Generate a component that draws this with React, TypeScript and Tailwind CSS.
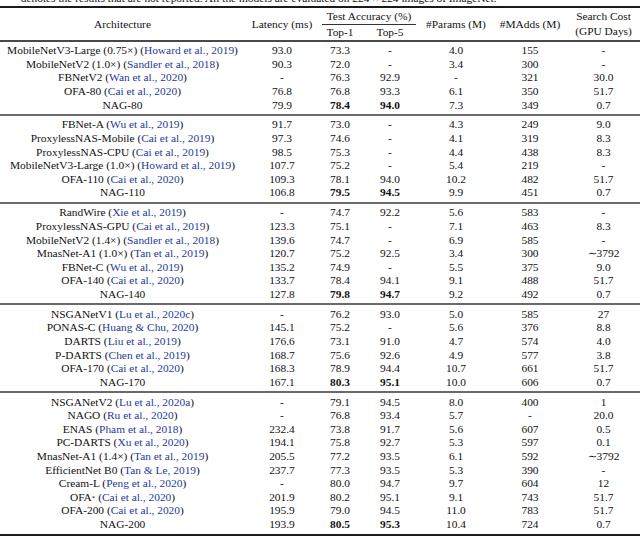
import React from 'react';

type Row = {
  name: string;
  cite?: string;
  sup?: string;
  lat: string;
  top1: string;
  top5: string;
  params: string;
  madds: string;
  cost: string;
  best?: boolean;
};

const COLS = 'grid grid-cols-[245px_74px_42px_58px_74px_74px_73px]';

const GROUPS: Row[][] = [
  [
    { name: 'MobileNetV3-Large (0.75×)', cite: 'Howard et al., 2019', lat: '93.0', top1: '73.3', top5: '-', params: '4.0', madds: '155', cost: '-' },
    { name: 'MobileNetV2 (1.0×)', cite: 'Sandler et al., 2018', lat: '90.3', top1: '72.0', top5: '-', params: '3.4', madds: '300', cost: '-' },
    { name: 'FBNetV2', cite: 'Wan et al., 2020', lat: '-', top1: '76.3', top5: '92.9', params: '-', madds: '321', cost: '30.0' },
    { name: 'OFA-80', cite: 'Cai et al., 2020', lat: '76.8', top1: '76.8', top5: '93.3', params: '6.1', madds: '350', cost: '51.7' },
    { name: 'NAG-80', lat: '79.9', top1: '78.4', top5: '94.0', params: '7.3', madds: '349', cost: '0.7', best: true },
  ],
  [
    { name: 'FBNet-A', cite: 'Wu et al., 2019', lat: '91.7', top1: '73.0', top5: '-', params: '4.3', madds: '249', cost: '9.0' },
    { name: 'ProxylessNAS-Mobile', cite: 'Cai et al., 2019', lat: '97.3', top1: '74.6', top5: '-', params: '4.1', madds: '319', cost: '8.3' },
    { name: 'ProxylessNAS-CPU', cite: 'Cai et al., 2019', lat: '98.5', top1: '75.3', top5: '-', params: '4.4', madds: '438', cost: '8.3' },
    { name: 'MobileNetV3-Large (1.0×)', cite: 'Howard et al., 2019', lat: '107.7', top1: '75.2', top5: '-', params: '5.4', madds: '219', cost: '-' },
    { name: 'OFA-110', cite: 'Cai et al., 2020', lat: '109.3', top1: '78.1', top5: '94.0', params: '10.2', madds: '482', cost: '51.7' },
    { name: 'NAG-110', lat: '106.8', top1: '79.5', top5: '94.5', params: '9.9', madds: '451', cost: '0.7', best: true },
  ],
  [
    { name: 'RandWire', cite: 'Xie et al., 2019', lat: '-', top1: '74.7', top5: '92.2', params: '5.6', madds: '583', cost: '-' },
    { name: 'ProxylessNAS-GPU', cite: 'Cai et al., 2019', lat: '123.3', top1: '75.1', top5: '-', params: '7.1', madds: '463', cost: '8.3' },
    { name: 'MobileNetV2 (1.4×)', cite: 'Sandler et al., 2018', lat: '139.6', top1: '74.7', top5: '-', params: '6.9', madds: '585', cost: '-' },
    { name: 'MnasNet-A1 (1.0×)', cite: 'Tan et al., 2019', lat: '120.7', top1: '75.2', top5: '92.5', params: '3.4', madds: '300', cost: '∼3792' },
    { name: 'FBNet-C', cite: 'Wu et al., 2019', lat: '135.2', top1: '74.9', top5: '-', params: '5.5', madds: '375', cost: '9.0' },
    { name: 'OFA-140', cite: 'Cai et al., 2020', lat: '133.7', top1: '78.4', top5: '94.1', params: '9.1', madds: '488', cost: '51.7' },
    { name: 'NAG-140', lat: '127.8', top1: '79.8', top5: '94.7', params: '9.2', madds: '492', cost: '0.7', best: true },
  ],
  [
    { name: 'NSGANetV1', cite: 'Lu et al., 2020c', lat: '-', top1: '76.2', top5: '93.0', params: '5.0', madds: '585', cost: '27' },
    { name: 'PONAS-C', cite: 'Huang & Chu, 2020', lat: '145.1', top1: '75.2', top5: '-', params: '5.6', madds: '376', cost: '8.8' },
    { name: 'DARTS', cite: 'Liu et al., 2019', lat: '176.6', top1: '73.1', top5: '91.0', params: '4.7', madds: '574', cost: '4.0' },
    { name: 'P-DARTS', cite: 'Chen et al., 2019', lat: '168.7', top1: '75.6', top5: '92.6', params: '4.9', madds: '577', cost: '3.8' },
    { name: 'OFA-170', cite: 'Cai et al., 2020', lat: '168.3', top1: '78.9', top5: '94.4', params: '10.7', madds: '661', cost: '51.7' },
    { name: 'NAG-170', lat: '167.1', top1: '80.3', top5: '95.1', params: '10.0', madds: '606', cost: '0.7', best: true },
  ],
  [
    { name: 'NSGANetV2', cite: 'Lu et al., 2020a', lat: '-', top1: '79.1', top5: '94.5', params: '8.0', madds: '400', cost: '1' },
    { name: 'NAGO', cite: 'Ru et al., 2020', lat: '-', top1: '76.8', top5: '93.4', params: '5.7', madds: '-', cost: '20.0' },
    { name: 'ENAS', cite: 'Pham et al., 2018', lat: '232.4', top1: '73.8', top5: '91.7', params: '5.6', madds: '607', cost: '0.5' },
    { name: 'PC-DARTS', cite: 'Xu et al., 2020', lat: '194.1', top1: '75.8', top5: '92.7', params: '5.3', madds: '597', cost: '0.1' },
    { name: 'MnasNet-A1 (1.4×)', cite: 'Tan et al., 2019', lat: '205.5', top1: '77.2', top5: '93.5', params: '6.1', madds: '592', cost: '∼3792' },
    { name: 'EfficientNet B0', cite: 'Tan & Le, 2019', lat: '237.7', top1: '77.3', top5: '93.5', params: '5.3', madds: '390', cost: '-' },
    { name: 'Cream-L', cite: 'Peng et al., 2020', lat: '-', top1: '80.0', top5: '94.7', params: '9.7', madds: '604', cost: '12' },
    { name: 'OFA', sup: '*', cite: 'Cai et al., 2020', lat: '201.9', top1: '80.2', top5: '95.1', params: '9.1', madds: '743', cost: '51.7' },
    { name: 'OFA-200', cite: 'Cai et al., 2020', lat: '195.9', top1: '79.0', top5: '94.5', params: '11.0', madds: '783', cost: '51.7' },
    { name: 'NAG-200', lat: '193.9', top1: '80.5', top5: '95.3', params: '10.4', madds: '724', cost: '0.7', best: true },
  ],
];

function TableRow({ row }: { row: Row }) {
  return (
    <div className={`${COLS} h-[13.6px] leading-[13.6px] text-center whitespace-nowrap`}>
      <div>
        {row.name}
        {row.sup && <sup className="text-[7px] relative -top-[1px]">{row.sup}</sup>}
        {row.cite && (
          <>
            {' ('}
            <span className="text-[#1f3a9a]">{row.cite}</span>
            {')'}
          </>
        )}
      </div>
      <div>{row.lat}</div>
      <div className={row.best ? 'font-bold' : ''}>{row.top1}</div>
      <div className={row.best ? 'font-bold' : ''}>{row.top5}</div>
      <div>{row.params}</div>
      <div>{row.madds}</div>
      <div>{row.cost}</div>
    </div>
  );
}

export default function App(): React.JSX.Element {
  return (
    <div className="w-[640px] h-[538px] overflow-hidden bg-white text-[#111] font-[family-name:'Liberation_Serif',serif] text-[11.4px]">
      {/* caption, cut at the top of the crop */}
      <div className="h-[6px] overflow-hidden flex items-end pl-[4px]">
        <div className="leading-[13.6px] whitespace-nowrap">
          “-” denotes the results that are not reported. All the models are evaluated on 224 × 224 images of ImageNet.
        </div>
      </div>

      {/* header */}
      <div className={`${COLS} border-t-2 border-b-2 border-t-[#1a1a1a] border-b-[#4a4a4a] text-center whitespace-nowrap`}>
        <div className="row-span-2 flex items-center justify-center">Architecture</div>
        <div className="row-span-2 flex items-center justify-center">Latency (ms)</div>
        <div className="col-span-2 pt-[2px] pb-[1px] px-[3px]">
          <div className="leading-[13.6px] border-b border-[#333]">Test Accuracy (%)</div>
        </div>
        <div className="row-span-2 flex items-center justify-center">#Params (M)</div>
        <div className="row-span-2 flex items-center justify-center">#MAdds (M)</div>
        <div className="row-span-2 flex flex-col items-center justify-center leading-[15px]">
          <span>Search Cost</span>
          <span>(GPU Days)</span>
        </div>
        <div className="leading-[13.6px] pb-[1px]">Top-1</div>
        <div className="leading-[13.6px] pb-[1px]">Top-5</div>
      </div>

      {/* body groups */}
      {GROUPS.map((group, gi) => (
        <div
          key={gi}
          className={
            gi === 0
              ? 'pt-[2px] pb-[2px]'
              : gi === GROUPS.length - 1
                ? 'border-t-2 border-[#6a6a6a] pt-[2.3px] pb-[2px] border-b-2 border-b-[#1a1a1a]'
                : 'border-t-2 border-[#6a6a6a] pt-[2.3px] pb-[2px]'
          }
        >
          {group.map((row) => (
            <TableRow key={row.name + row.lat} row={row} />
          ))}
        </div>
      ))}
    </div>
  );
}
